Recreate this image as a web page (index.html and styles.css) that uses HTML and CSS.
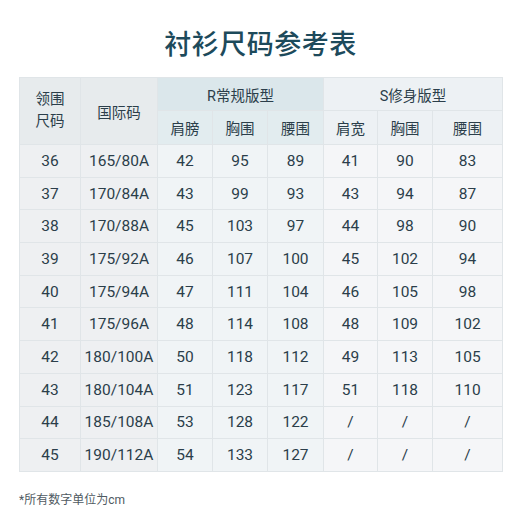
FILE: index.html
```html
<!DOCTYPE html>
<html lang="zh">
<head>
<meta charset="utf-8">
<link rel="stylesheet" href="styles.css">
</head>
<body>
<div class="page">
  <h1 class="title">衬衫尺码参考表</h1>
  <table class="size-table">
    <colgroup>
      <col class="c1"><col class="c2"><col class="c3"><col class="c3"><col class="c5"><col class="c6"><col class="c3"><col class="c8">
    </colgroup>
    <thead>
      <tr class="h1">
        <th rowspan="2" class="base two-line">领围<br>尺码</th>
        <th rowspan="2" class="base">国际码</th>
        <th colspan="3" class="rgrp">R常规版型</th>
        <th colspan="3" class="sgrp">S修身版型</th>
      </tr>
      <tr class="h2">
        <th class="rsub">肩膀</th><th class="rsub">胸围</th><th class="rsub">腰围</th>
        <th class="ssub">肩宽</th><th class="ssub">胸围</th><th class="ssub">腰围</th>
      </tr>
    </thead>
    <tbody>
      <tr><td class="b">36</td><td class="b">165/80A</td><td class="r">42</td><td class="r">95</td><td class="r">89</td><td class="s">41</td><td class="s">90</td><td class="s">83</td></tr>
      <tr><td class="b">37</td><td class="b">170/84A</td><td class="r">43</td><td class="r">99</td><td class="r">93</td><td class="s">43</td><td class="s">94</td><td class="s">87</td></tr>
      <tr><td class="b">38</td><td class="b">170/88A</td><td class="r">45</td><td class="r">103</td><td class="r">97</td><td class="s">44</td><td class="s">98</td><td class="s">90</td></tr>
      <tr><td class="b">39</td><td class="b">175/92A</td><td class="r">46</td><td class="r">107</td><td class="r">100</td><td class="s">45</td><td class="s">102</td><td class="s">94</td></tr>
      <tr><td class="b">40</td><td class="b">175/94A</td><td class="r">47</td><td class="r">111</td><td class="r">104</td><td class="s">46</td><td class="s">105</td><td class="s">98</td></tr>
      <tr><td class="b">41</td><td class="b">175/96A</td><td class="r">48</td><td class="r">114</td><td class="r">108</td><td class="s">48</td><td class="s">109</td><td class="s">102</td></tr>
      <tr><td class="b">42</td><td class="b">180/100A</td><td class="r">50</td><td class="r">118</td><td class="r">112</td><td class="s">49</td><td class="s">113</td><td class="s">105</td></tr>
      <tr><td class="b">43</td><td class="b">180/104A</td><td class="r">51</td><td class="r">123</td><td class="r">117</td><td class="s">51</td><td class="s">118</td><td class="s">110</td></tr>
      <tr><td class="b">44</td><td class="b">185/108A</td><td class="r">53</td><td class="r">128</td><td class="r">122</td><td class="s">/</td><td class="s">/</td><td class="s">/</td></tr>
      <tr><td class="b">45</td><td class="b">190/112A</td><td class="r">54</td><td class="r">133</td><td class="r">127</td><td class="s">/</td><td class="s">/</td><td class="s">/</td></tr>
    </tbody>
  </table>
  <p class="note">*所有数字单位为cm</p>
</div>
</body>
</html>
```
FILE: styles.css
```css
html, body {
  margin: 0;
  padding: 0;
  background: #ffffff;
}
.page {
  width: 520px;
  height: 520px;
  padding: 0 18px 0 19px;
  box-sizing: border-box;
  font-family: Roboto, "Noto Sans CJK SC", sans-serif;
  color: #2b3e4a;
}
.title {
  margin: 0;
  padding-top: 29px;
  box-sizing: border-box;
  font-size: 27px;
  line-height: 32px;
  font-weight: 500;
  text-align: center;
  color: #1d4a5b;
  letter-spacing: 0.5px;
  height: 77px;
}
.size-table {
  width: 483px;
  border-collapse: collapse;
  table-layout: fixed;
}
.c1 { width: 61px; }
.c2 { width: 77px; }
.c3 { width: 55px; }
.c5 { width: 56px; }
.c6 { width: 54px; }
.c8 { width: 70px; }
.size-table th,
.size-table td {
  border: 1px solid #e0e5e8;
  padding: 0;
  text-align: center;
  vertical-align: middle;
}
.size-table th {
  font-weight: 400;
  font-size: 14.5px;
  color: #2b3e4a;
}
.h1 th { height: 32px; }
.h2 th { height: 33px; }
.two-line { line-height: 22px; }
.base { background: #e7ebed; }
.rgrp { background: #dbe7eb; }
.sgrp { background: #edf1f4; }
.rsub { background: #e2ecef; }
.ssub { background: #edf1f4; }
.size-table td {
  height: 31.7px;
  font-size: 15.5px;
  line-height: 20px;
}
.b { background: #eef0f2; }
.r { background: #f0f4f6; }
.s { background: #f5f6f8; }
.note {
  margin: 20px 0 0 0;
  font-size: 12px;
  line-height: 16px;
  color: #4f5a62;
}
```
